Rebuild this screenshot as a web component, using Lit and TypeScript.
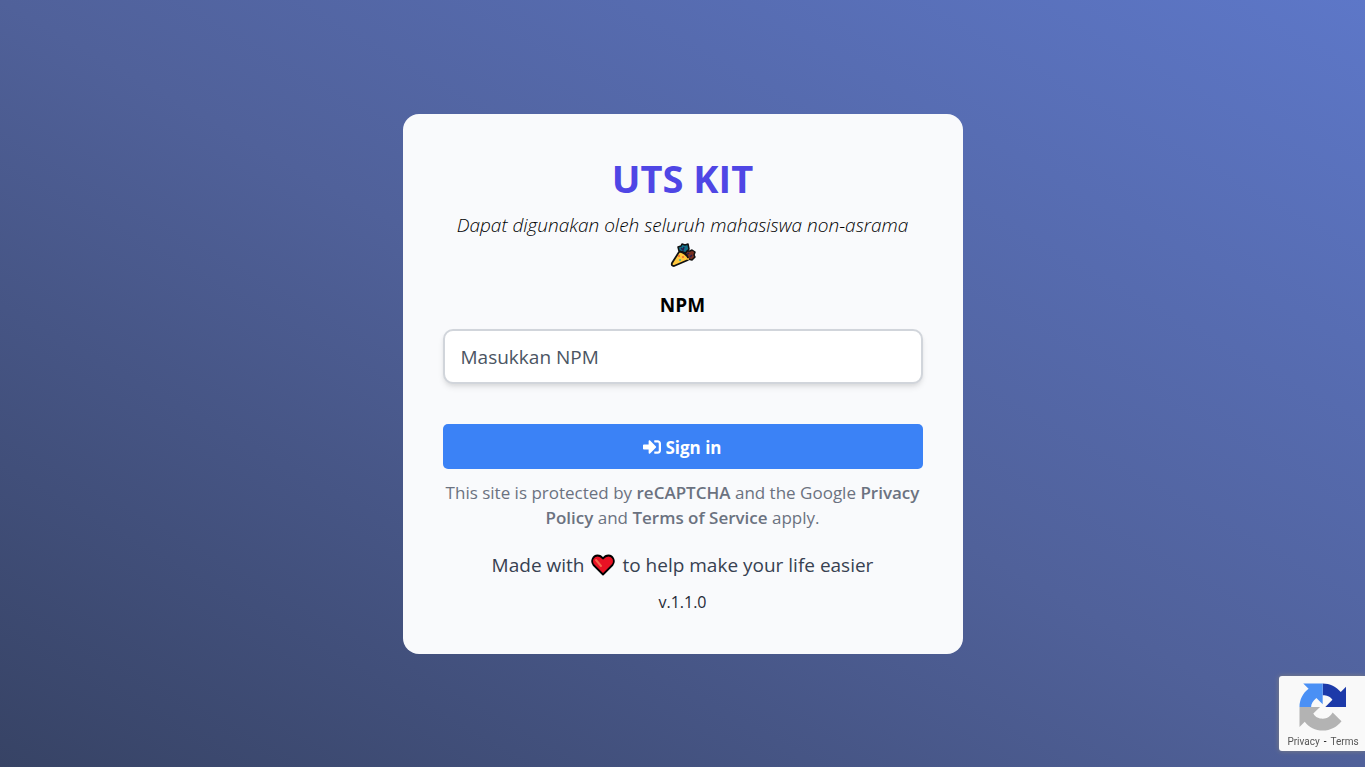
import { LitElement, html, css } from "lit";
import { customElement, state } from "lit/decorators.js";

@customElement("recaptcha-badge")
export class RecaptchaBadge extends LitElement {
  static styles = css`
    :host {
      display: block;
      position: fixed;
      right: 0;
      bottom: 16px;
      box-sizing: border-box;
      width: 86px;
      padding: 7px 0 2px;
      border-radius: 3px 0 0 3px;
      background: #f9f9f9;
      box-shadow: 0 0 5px gray;
      text-align: center;
    }
    .logo {
      display: block;
      width: 48px;
      height: 48px;
      margin: 0 auto 3px;
    }
    .links {
      display: flex;
      justify-content: center;
      gap: 4px;
      padding-left: 2px;
      font: 10px/15px Roboto, sans-serif;
      color: #000;
      white-space: nowrap;
    }
    .links a {
      color: #555;
      text-decoration: none;
    }
  `;

  render() {
    return html`
      <svg class="logo" viewBox="-1 0 64 64" aria-label="reCAPTCHA" role="img">
        <path fill="#1c3aa9" d="M63 32V5l-7 7C50.200 4.900 41.500.5 31.900.5v15.800c4.700-.1 9.700 1.100 13 5.900L35.400 32z"/>
        <path fill="#4a90f5" d="M31.900.5H6l7.100 7C5.500 13 1 22 1 32h15.500c-.1-3.900 2.300-8.400 7-12l8.400 8.400z"/>
        <path fill="#b3b3b3" d="M1 32v26.500l7-7C13.500 58.900 22 63.300 32 63.300c10.200 0 19.300-4.900 25-12.400L45.200 39.200C42.500 44 38 47.500 32 47.500c-5 0-9.500-1.500-12.600-6.900l9-8.600z"/>
      </svg>
      <div class="links">
        <a href="#privacy">Privacy</a><span>-</span><a href="#terms">Terms</a>
      </div>
    `;
  }
}

@customElement("app-root")
export class AppRoot extends LitElement {
  static styles = css`
    :host {
      display: flex;
      align-items: center;
      justify-content: center;
      box-sizing: border-box;
      min-height: 100vh;
      background: linear-gradient(to top right, #374365, #50619a, #5d77c8);
      font-family: "Segoe UI", "Open Sans", "Noto Sans", sans-serif;
      color: #000;
    }
    .card {
      box-sizing: border-box;
      width: 100%;
      max-width: 560px;
      padding: 40px;
      border-radius: 16px;
      background: #f9fafc;
      text-align: center;
    }
    h1 {
      margin: 0 0 8px;
      font-size: 38px;
      line-height: 48px;
      font-weight: 700;
      color: #4f46e5;
    }
    .subtitle {
      margin: 0 0 20px;
      font-size: 19px;
      line-height: 30px;
      font-weight: 300;
      font-style: italic;
    }
    .emoji {
      display: block;
      width: 26px;
      height: 30px;
      margin: 0 auto;
    }
    .label {
      display: block;
      margin-bottom: 9px;
      font-size: 19px;
      line-height: 30px;
      font-weight: 700;
    }
    .field {
      display: block;
      box-sizing: border-box;
      width: 100%;
      height: 55px;
      margin-bottom: 40px;
      padding: 2px 16px 0;
      border: 2px solid #d1d5db;
      border-radius: 10px;
      background: #fff;
      box-shadow: 0 4px 6px -1px rgba(0, 0, 0, 0.1), 0 2px 4px -1px rgba(0, 0, 0, 0.06);
      font-family: inherit;
      font-size: 19px;
      color: #374151;
      outline: none;
    }
    .field::placeholder {
      color: #4b5563;
      opacity: 1;
    }
    .submit {
      display: flex;
      align-items: center;
      justify-content: center;
      gap: 4px;
      width: 100%;
      height: 45px;
      margin-bottom: 11px;
      padding: 2px 0 0;
      border: 0;
      border-radius: 5px;
      background: #3b82f6;
      font-family: inherit;
      font-size: 17px;
      font-weight: 700;
      color: #fff;
      cursor: pointer;
    }
    .enter {
      width: 18px;
      height: 18px;
      fill: currentColor;
    }
    .legal {
      margin: 0 0 20px;
      font-size: 17px;
      line-height: 25px;
      color: #6b7280;
    }
    .legal a {
      font-weight: 600;
      color: inherit;
      text-decoration: none;
    }
    .made {
      display: flex;
      align-items: center;
      justify-content: center;
      gap: 7px;
      margin: 0 0 11px;
      font-size: 19px;
      line-height: 30px;
      color: #374151;
    }
    .heart {
      width: 24px;
      height: 22px;
    }
    .version {
      margin: 0;
      font-size: 16px;
      line-height: 23px;
      color: #1f2937;
    }
  `;

  @state() private npm = "";

  private onInput(e: Event) {
    this.npm = (e.target as HTMLInputElement).value;
  }

  render() {
    return html`
      <main class="card">
        <h1>UTS KIT</h1>
        <p class="subtitle">
          Dapat digunakan oleh seluruh mahasiswa non-asrama
          <svg class="emoji" viewBox="0 0 26 30" role="img" aria-label="party popper">
            <path d="m9 11-1-4 3-1 1-2 3 1 3-1 1 5-3 4z" fill="#127089" stroke="#111" stroke-width="1.500" stroke-linejoin="round"/>
            <path d="m15 14 2-3 3 0 2-1 3 2-1 3 1 2-3 3-4-1-3-3z" fill="#7a3123" stroke="#111" stroke-width="1.500" stroke-linejoin="round"/>
            <path d="m11 8 2 2 1-3m2 8 3-2m1 4 2-2" fill="none" stroke="#251d4c" stroke-width="1.500"/>
            <path d="M9 12 2 23q-1 3 2 3l14-6q1-3-3-6t-6-2z" fill="#ffc83d" stroke="#111" stroke-width="1.800" stroke-linejoin="round"/>
            <circle cx="9" cy="16" r="1" fill="#f0652f"/>
            <circle cx="10" cy="20" r="1" fill="#2cb5a9"/>
            <circle cx="13" cy="17" r="1" fill="#f0652f"/>
            <circle cx="18" cy="19" r="1" fill="#ffc83d"/>
          </svg>
        </p>
        <form @submit=${(e: Event) => e.preventDefault()}>
          <label class="label" for="npm">NPM</label>
          <input class="field" id="npm" type="text" placeholder="Masukkan NPM" .value=${this.npm} @input=${this.onInput} />
          <button class="submit" type="submit">
            <svg class="enter" viewBox="0 0 512 512" aria-hidden="true">
              <path d="M416 448h-84c-6.600 0-12-5.400-12-12v-40c0-6.600 5.400-12 12-12h84c17.700 0 32-14.300 32-32V160c0-17.700-14.300-32-32-32h-84c-6.600 0-12-5.400-12-12V76c0-6.600 5.400-12 12-12h84c53 0 96 43 96 96v192c0 53-43 96-96 96zm-47-209L201 71c-15-15-41-4.500-41 17v96H24c-13.300 0-24 10.700-24 24v96c0 13.300 10.700 24 24 24h136v96c0 21.500 26 32 41 17l168-168c9.300-9.400 9.300-24.600 0-34z"/>
            </svg>
            <span>Sign in</span>
          </button>
        </form>
        <p class="legal">
          This site is protected by <a href="#recaptcha">reCAPTCHA</a> and the Google
          <a href="#privacy">Privacy Policy</a> and <a href="#terms">Terms of Service</a> apply.
        </p>
        <p class="made">
          <span>Made with</span>
          <svg class="heart" viewBox="0 0 24 22" role="img" aria-label="love">
            <path d="M12 20.500 2.500 11C-.5 7 2 1.500 6.500 1.500c2.500 0 4 1 5.500 3 1.500-2 3-3 5.500-3 4.500 0 7 5.500 4 9.500z" fill="#e81224" stroke="#000" stroke-width="1.800" stroke-linejoin="round"/>
            <path d="m5 6 5 6" stroke="#f4694d" stroke-width="2" stroke-linecap="round"/>
          </svg>
          <span>to help make your life easier</span>
        </p>
        <p class="version">v.1.1.0</p>
      </main>
      <recaptcha-badge></recaptcha-badge>
    `;
  }
}
